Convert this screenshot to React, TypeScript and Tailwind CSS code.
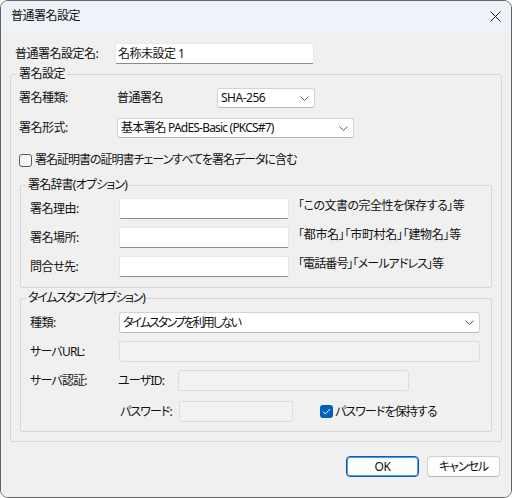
import type { ReactNode } from "react";

const Chevron = () => (
  <svg width="9" height="5" viewBox="0 0 9 5" className="shrink-0">
    <path d="M0.5 0.5 L4.5 4.5 L8.5 0.5" fill="none" stroke="#5f5f5f" strokeWidth="1" />
  </svg>
);

const ComboBox = ({
  w,
  h = "h-[20px]",
  tight = "",
  children,
}: {
  w: string;
  h?: string;
  tight?: string;
  children: ReactNode;
}) => (
  <div
    className={`${w} ${h} bg-white border border-[#d3d3d3] border-b-[#b8b8b8] rounded-[3px] flex items-center justify-between pl-[3px] pr-[5px]`}
  >
    <span className={`leading-4 whitespace-nowrap ${tight}`}>{children}</span>
    <Chevron />
  </div>
);

const TextBox = ({ w, children }: { w: string; children?: ReactNode }) => (
  <div
    className={`${w} h-[21px] bg-white border border-[#e8e8e8] border-b-[#8a8a8a] rounded-[2px] flex items-center pl-[2px] leading-4 whitespace-nowrap`}
  >
    {children}
  </div>
);

const DisabledBox = ({ w }: { w: string }) => (
  <div className={`${w} h-[21px] bg-[#f2f2f2] border border-[#dddddd] rounded-[2px]`} />
);

const CheckBox = ({ checked }: { checked?: boolean }) =>
  checked ? (
    <span className="w-[13px] h-[13px] rounded-[3px] bg-[#005fb8] flex items-center justify-center shrink-0">
      <svg width="9" height="7" viewBox="0 0 9 7">
        <path d="M1 3.6 L3.4 6 L8 1" fill="none" stroke="#ffffff" strokeWidth="1" />
      </svg>
    </span>
  ) : (
    <span className="w-[13px] h-[13px] rounded-[3px] border border-[#5a5a5a] bg-[#f7f7f7] shrink-0" />
  );

export default function App() {
  return (
    <div className="w-[512px] h-[498px] bg-white text-[12px] leading-4 tracking-[-0.5px] text-[#111] [font-family:'Noto_Sans','Noto_Sans_CJK_JP',sans-serif] [font-feature-settings:'palt']">
      <div className="w-[512px] h-[498px] border border-[#646464] rounded-lg overflow-hidden flex flex-col">
        {/* title bar */}
        <div className="h-[30px] shrink-0 bg-[#eef3f9] flex items-center justify-between pl-[10px] pr-[10px]">
          <span>普通署名設定</span>
          <svg width="11" height="11" viewBox="0 0 11 11">
            <path d="M0.5 0.5 L10.5 10.5 M10.5 0.5 L0.5 10.5" stroke="#1a1a1a" strokeWidth="1" />
          </svg>
        </div>

        <div className="flex-1 bg-[#f0f0f0] px-[9px] pt-[12px]">
          <div className="flex items-center h-[21px]">
            <span className="pl-[5px] w-[105px]">普通署名設定名:</span>
            <TextBox w="w-[199px]">名称未設定 1</TextBox>
          </div>

          {/* 署名設定 */}
          <fieldset className="mt-[2px] border border-[#d6d6d6] rounded-[2px] pl-[6px] pr-[9px] pb-[9px]">
            <legend className="px-[2px] leading-4">署名設定</legend>
            <div className="pl-[2px]">
              <div className="mt-[6px] flex items-center h-[20px]">
                <span className="w-[98px]">署名種類:</span>
                <span className="w-[100px]">普通署名</span>
                <ComboBox w="w-[98px]">SHA-256</ComboBox>
              </div>

              <div className="mt-[10px] flex items-center h-[20px]">
                <span className="w-[98px]">署名形式:</span>
                <ComboBox w="w-[237px]" tight="tracking-[-0.8px]">
                  基本署名 PAdES-Basic (PKCS#7)
                </ComboBox>
              </div>

              <div className="mt-[14px] flex items-center h-4">
                <CheckBox />
                <span className="ml-[3px] whitespace-nowrap tracking-[-1px]">
                  署名証明書の証明書チェーンすべてを署名データに含む
                </span>
              </div>

              {/* 署名辞書 */}
              <fieldset className="mt-[9px] ml-[1px] border border-[#d6d6d6] rounded-[2px] pl-[5px] pb-[10px]">
                <legend className="px-[2px] leading-4 tracking-[-0.8px]">署名辞書(オプション)</legend>
                <div className="pl-[4px]">
                  {[
                    ["署名理由:", "「この文書の完全性を保存する」等", "tracking-[-0.5px]"],
                    ["署名場所:", "「都市名」「市町村名」「建物名」等", "tracking-[-0.3px]"],
                    ["問合せ先:", "「電話番号」「メールアドレス」等", "tracking-[-0.9px]"],
                  ].map(([label, hint, tight], i) => (
                    <div key={label} className={`${i === 0 ? "mt-[5px]" : "mt-[8px]"} flex items-center h-[21px]`}>
                      <span className="w-[89px]">{label}</span>
                      <TextBox w="w-[170px]" />
                      <span className={`ml-[9px] -mt-[6px] whitespace-nowrap ${tight}`}>{hint}</span>
                    </div>
                  ))}
                </div>
              </fieldset>

              {/* タイムスタンプ */}
              <fieldset className="mt-[2px] ml-[1px] border border-[#d6d6d6] rounded-[2px] pl-[5px] pb-[9px]">
                <legend className="px-[2px] leading-4 tracking-[-1.3px]">タイムスタンプ(オプション)</legend>
                <div className="pl-[4px]">
                  <div className="mt-[6px] flex items-center h-[21px]">
                    <span className="w-[89px]">種類:</span>
                    <ComboBox w="w-[361px]" h="h-[21px]" tight="tracking-[-2px]">
                      タイムスタンプを利用しない
                    </ComboBox>
                  </div>

                  <div className="mt-[8px] flex items-center h-[21px]">
                    <span className="w-[89px] tracking-[-0.8px]">サーバURL:</span>
                    <DisabledBox w="w-[361px]" />
                  </div>

                  <div className="mt-[8px] flex items-center h-[21px]">
                    <span className="w-[88px] tracking-[-0.8px]">サーバ認証:</span>
                    <span className="w-[60px] tracking-[-0.8px]">ユーザID:</span>
                    <DisabledBox w="w-[231px]" />
                  </div>

                  <div className="mt-[10px] flex items-center h-[21px]">
                    <span className="w-[90px]" />
                    <span className="w-[59px] tracking-[-0.9px]">パスワード:</span>
                    <DisabledBox w="w-[114px]" />
                    <span className="ml-[27px]">
                      <CheckBox checked />
                    </span>
                    <span className="ml-[2px] whitespace-nowrap tracking-[-0.9px]">パスワードを保持する</span>
                  </div>
                </div>
              </fieldset>
            </div>
          </fieldset>

          <div className="mt-[14px] flex justify-end gap-[8px] pr-[2px]">
            <button className="w-[73px] h-[21px] bg-[#fdfdfd] border border-[#005fb8] shadow-[inset_0_0_0_1px_#5b9bd5] rounded-[4px] leading-4">
              OK
            </button>
            <button className="w-[73px] h-[21px] bg-[#fdfdfd] border border-[#d0d0d0] border-b-[#b5b5b5] rounded-[4px] leading-4 tracking-[-1px]">
              キャンセル
            </button>
          </div>
        </div>
      </div>
    </div>
  );
}
